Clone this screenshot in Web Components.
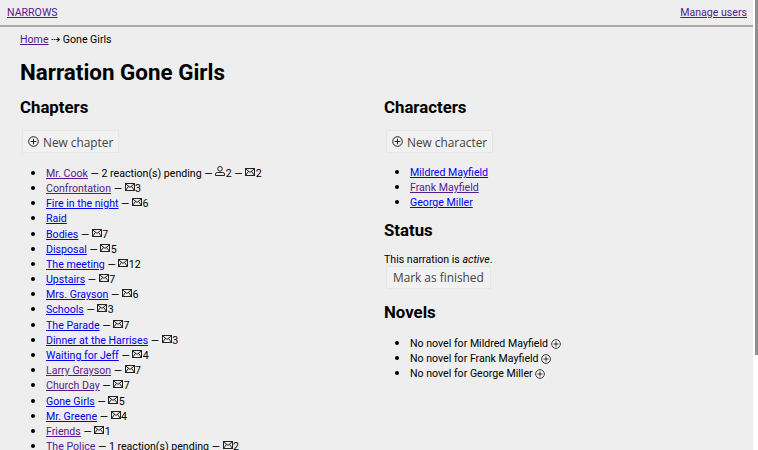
<!DOCTYPE html>
<html>
<head>
<meta charset="utf-8">
<style>
html, body { margin: 0; height: 100%; overflow: hidden; }
body { background: #eee; color: #000; font: 10.6px/15.2px Roboto, sans-serif; }
</style>
</head>
<body>
<app-page></app-page>
<script>
const ENVELOPE = `<svg width="10" height="8" viewBox="0 0 10 8" fill="none" stroke="#222" stroke-width="1"><rect x=".5" y=".5" width="9" height="7"/><path d="M.5 .8 5 4.4 9.5 .8M.5 7.5 3.6 3.2M9.5 7.5 6.4 3.2"/></svg>`;
const PERSON = `<svg width="10" height="10" viewBox="0 0 10 10" fill="none" stroke="#222" stroke-width="1"><circle cx="5" cy="2.8" r="2.3"/><path d="M.5 9.5V8Q.5 6.5 2.5 6.5H7.5Q9.5 6.5 9.5 8V9.5Z"/></svg>`;
const PLUS = `<svg width="11" height="11" viewBox="0 0 11 11" fill="none" stroke="#222" stroke-width="1"><circle cx="5.5" cy="5.5" r="4.8"/><path d="M5.5 2.7V8.3M2.7 5.5H8.3"/></svg>`;
const BULLET = `li { list-style: disc; height: 15.2px; } li::marker { font-size: 14px; }`;

class AppLink extends HTMLElement {
    constructor() {
        super();
        let shadow = this.attachShadow({mode: 'open'});
        let color = this.hasAttribute('visited') ? '#551a8b' : '#00e';
        shadow.innerHTML = `
            <style>
                :host { display: inline; }
                a { color: ${color}; text-decoration: underline; }
            </style>
            <a href="#"><slot></slot></a>`;
    }
}

class PlainButton extends HTMLElement {
    constructor() {
        super();
        let shadow = this.attachShadow({mode: 'open'});
        let plus = this.hasAttribute('plus');
        shadow.innerHTML = `
            <style>
                :host { display: inline-flex; align-items: center; gap: 4px; height: 21px;
                    padding: 0 ${plus ? '5px 0 5px' : '6px'};
                    background: #f1f1f1; border: 1px solid #e6e6e6; color: #444;
                    font: 11.85px "Open Sans", sans-serif; }
                svg { display: block; }
            </style>
            ${plus ? PLUS : ''}<slot></slot>`;
    }
}

class SectionTitle extends HTMLElement {
    constructor() {
        super();
        let shadow = this.attachShadow({mode: 'open'});
        shadow.innerHTML = `
            <style>
                :host { display: block; font: 700 16.8px/22px Roboto, sans-serif; }
            </style>
            <slot></slot>`;
    }
}

class ChapterItem extends HTMLElement {
    constructor() {
        super();
        let shadow = this.attachShadow({mode: 'open'});
        let title = this.getAttribute('data-title');
        let visited = this.hasAttribute('visited') ? 'visited' : '';
        let pending = this.getAttribute('data-pending');
        let people = this.getAttribute('data-people');
        let mail = this.getAttribute('data-mail');
        let parts = '';
        if (pending) parts += ` — ${pending} reaction(s) pending`;
        if (people) parts += ` — <span class="i">${PERSON}</span>${people}`;
        if (mail) parts += ` — <span class="i">${ENVELOPE}</span>${mail}`;
        shadow.innerHTML = `
            <style>
                :host { display: block; }
                ${BULLET}
                .i { display: inline-block; vertical-align: 1px; line-height: 0; margin-right: .5px; }
            </style>
            <li><app-link ${visited}>${title}</app-link>${parts}</li>`;
    }
}

class NovelItem extends HTMLElement {
    constructor() {
        super();
        let shadow = this.attachShadow({mode: 'open'});
        shadow.innerHTML = `
            <style>
                :host { display: block; }
                ${BULLET}
                .i { display: inline-block; vertical-align: -2px; line-height: 0; background: #f5f5f5; }
                svg { width: 10px; height: 10px; }
            </style>
            <li>No novel for <slot></slot> <span class="i">${PLUS}</span></li>`;
    }
}

class CharacterItem extends HTMLElement {
    constructor() {
        super();
        let shadow = this.attachShadow({mode: 'open'});
        shadow.innerHTML = `
            <style>
                :host { display: block; }
                ${BULLET}
            </style>
            <li><app-link ${this.hasAttribute('visited') ? 'visited' : ''}><slot></slot></app-link></li>`;
    }
}

class AppList extends HTMLElement {
    constructor() {
        super();
        let shadow = this.attachShadow({mode: 'open'});
        shadow.innerHTML = `
            <style>
                :host { display: block; padding-left: 26px; }
            </style>
            <slot></slot>`;
    }
}

class TopBar extends HTMLElement {
    constructor() {
        super();
        let shadow = this.attachShadow({mode: 'open'});
        shadow.innerHTML = `
            <style>
                :host { display: flex; justify-content: space-between; align-items: center;
                    height: 25px; padding: 0 11px 0 7px; border-bottom: 2px solid #aaa; }
            </style>
            <app-link visited>NARROWS</app-link>
            <app-link visited>Manage users</app-link>`;
    }
}

class ScrollThumb extends HTMLElement {
    constructor() {
        super();
        let shadow = this.attachShadow({mode: 'open'});
        shadow.innerHTML = `
            <style>
                :host { position: fixed; top: 0; right: 0; bottom: 0; width: 5px; background: #fff; }
                div { position: absolute; top: 0; right: 0; width: 3px; height: 355px; background: #909090; }
            </style>
            <div></div>`;
    }
}

class AppPage extends HTMLElement {
    constructor() {
        super();
        let shadow = this.attachShadow({mode: 'open'});
        let chapters = [
            ['Mr. Cook', 2, true, 2, 2],
            ['Confrontation', 3, true],
            ['Fire in the night', 6],
            ['Raid', 0],
            ['Bodies', 7],
            ['Disposal', 5],
            ['The meeting', 12],
            ['Upstairs', 7],
            ['Mrs. Grayson', 6],
            ['Schools', 3],
            ['The Parade', 7],
            ['Dinner at the Harrises', 3],
            ['Waiting for Jeff', 4],
            ['Larry Grayson', 7, true],
            ['Church Day', 7, true],
            ['Gone Girls', 5],
            ['Mr. Greene', 4],
            ['Friends', 1, true],
            ['The Police', 2, true, 1]
        ];
        let items = chapters.map(([title, mail, visited, pending, people]) => `
            <chapter-item data-title="${title}" ${mail ? `data-mail="${mail}"` : ''}
                ${visited ? 'visited' : ''} ${pending ? `data-pending="${pending}"` : ''}
                ${people ? `data-people="${people}"` : ''}></chapter-item>`).join('');
        shadow.innerHTML = `
            <style>
                :host { display: block; }
                main { padding: 5px 10px 0 20px; }
                h1 { margin: 12px 0 11px; font: 700 22.4px/26px Roboto, sans-serif; }
                .columns { display: grid; grid-template-columns: 364px 1fr; }
                .action { display: flex; margin: 12px 0 11.6px 2px; }
                .characters { margin-top: -.9px; }
                .finish { display: flex; margin: -1px 0 0 2px; }
                .status { margin-top: 9.9px; }
                p { margin: 10.4px 0 0; }
                .novels { margin-top: 12px; }
                .novels + app-list { margin-top: 12px; }
            </style>
            <top-bar></top-bar>
            <main>
                <div><app-link visited>Home</app-link> ⇢ Gone Girls</div>
                <h1>Narration Gone Girls</h1>
                <div class="columns">
                    <section>
                        <section-title>Chapters</section-title>
                        <div class="action"><plain-button plus>New chapter</plain-button></div>
                        <app-list>${items}</app-list>
                    </section>
                    <section>
                        <section-title>Characters</section-title>
                        <div class="action"><plain-button plus>New character</plain-button></div>
                        <app-list class="characters">
                            <character-item>Mildred Mayfield</character-item>
                            <character-item visited>Frank Mayfield</character-item>
                            <character-item>George Miller</character-item>
                        </app-list>
                        <section-title class="status">Status</section-title>
                        <p>This narration is <em>active</em>.</p>
                        <div class="finish"><plain-button>Mark as finished</plain-button></div>
                        <section-title class="novels">Novels</section-title>
                        <app-list>
                            <novel-item>Mildred Mayfield</novel-item>
                            <novel-item>Frank Mayfield</novel-item>
                            <novel-item>George Miller</novel-item>
                        </app-list>
                    </section>
                </div>
            </main>
            <scroll-thumb></scroll-thumb>`;
    }
}

window.customElements.define('app-link', AppLink);
window.customElements.define('plain-button', PlainButton);
window.customElements.define('section-title', SectionTitle);
window.customElements.define('chapter-item', ChapterItem);
window.customElements.define('novel-item', NovelItem);
window.customElements.define('character-item', CharacterItem);
window.customElements.define('app-list', AppList);
window.customElements.define('top-bar', TopBar);
window.customElements.define('scroll-thumb', ScrollThumb);
window.customElements.define('app-page', AppPage);
</script>
</body>
</html>
